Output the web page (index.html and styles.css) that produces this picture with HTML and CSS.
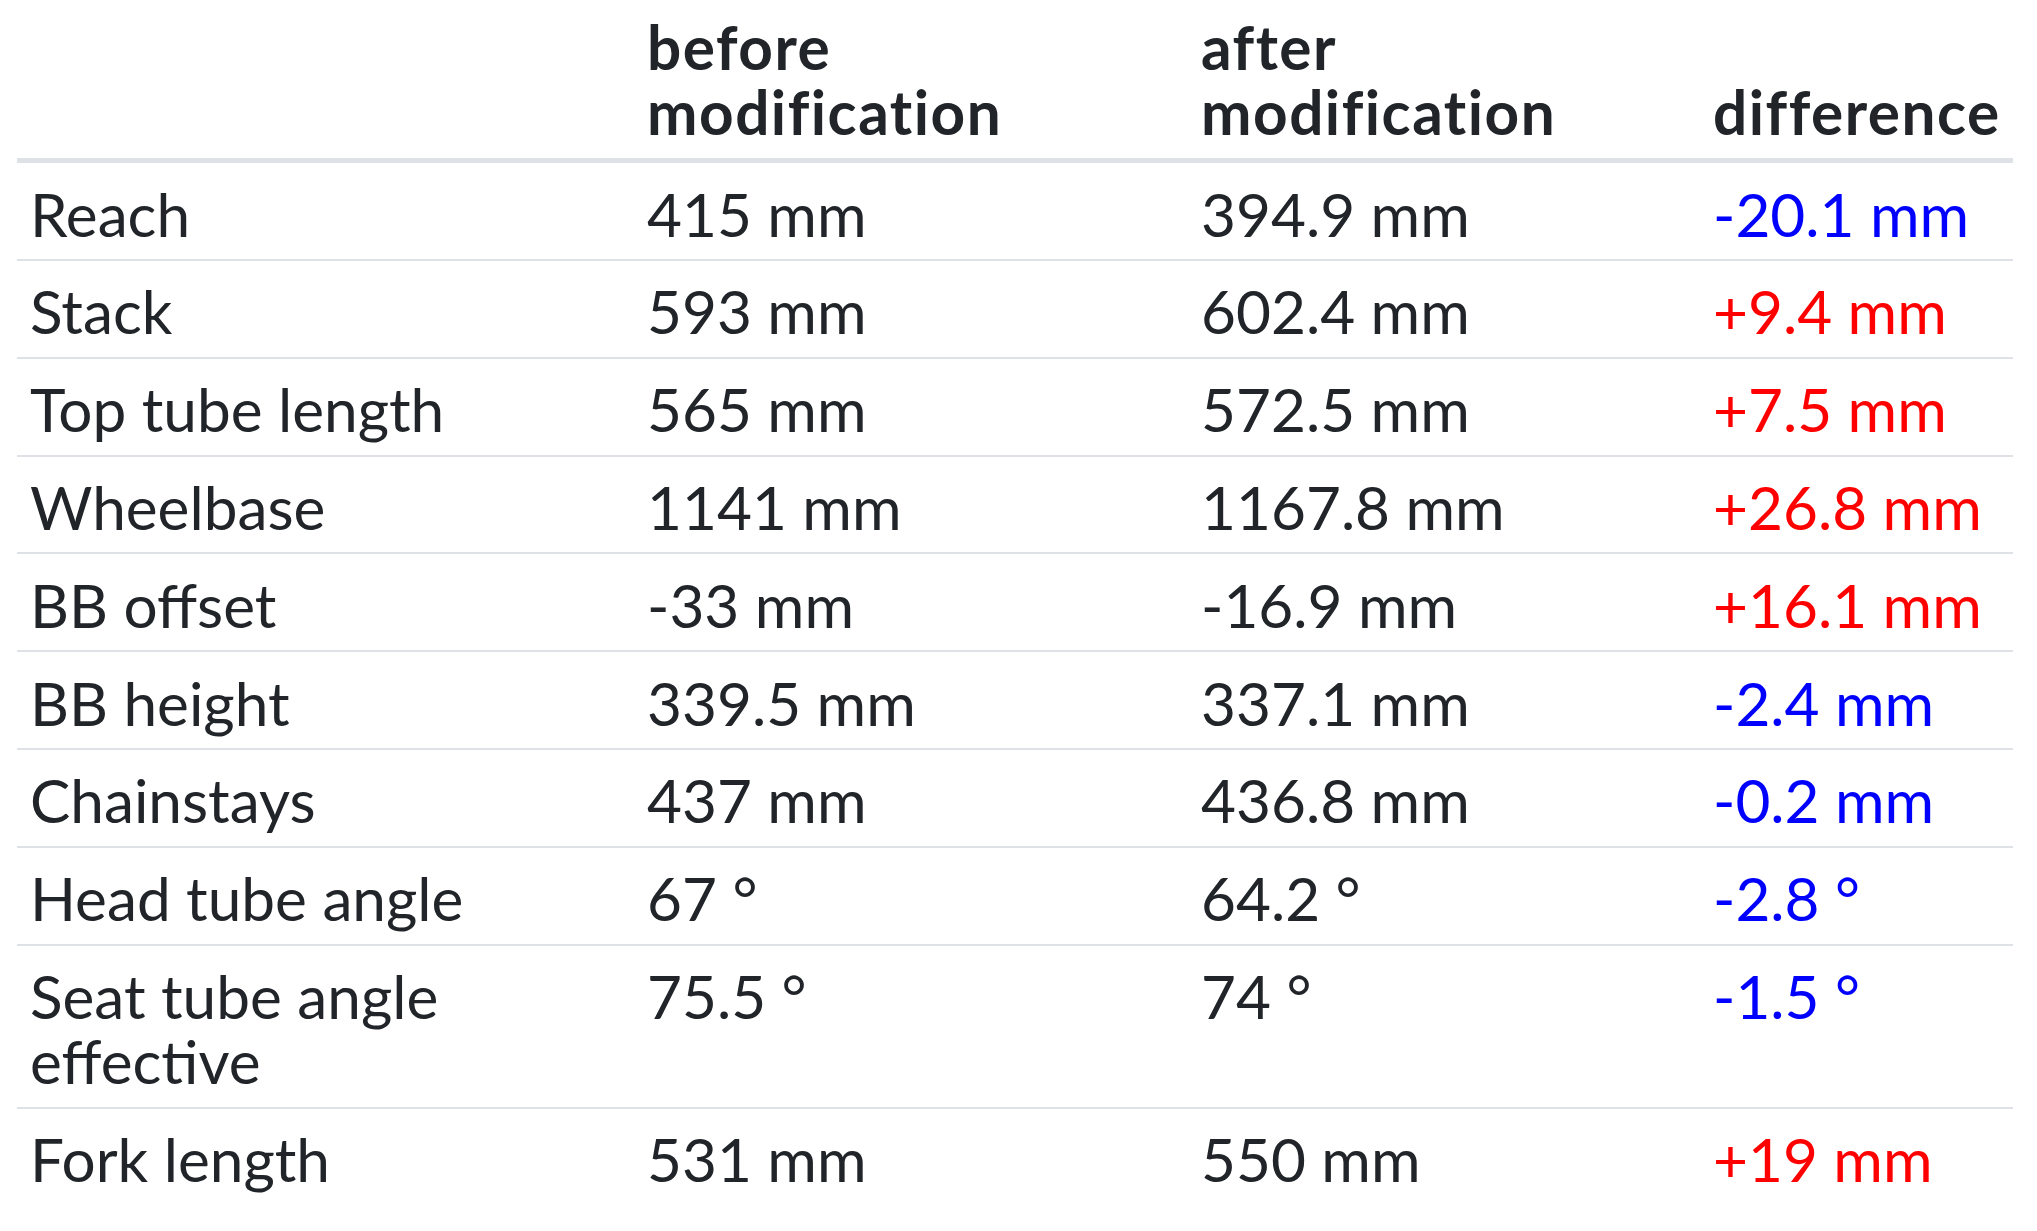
FILE: index.html
```html
<!DOCTYPE html>
<html>
<head>
<meta charset="utf-8">
<title>Geometry comparison</title>
<link rel="stylesheet" href="styles.css">
</head>
<body>
<div class="page">
<table class="geo">
  <colgroup>
    <col class="c-name">
    <col class="c-before">
    <col class="c-after">
    <col class="c-diff">
  </colgroup>
  <thead>
    <tr>
      <th></th>
      <th>before<br>modification</th>
      <th>after<br>modification</th>
      <th>difference</th>
    </tr>
  </thead>
  <tbody>
    <tr><td>Reach</td><td>415 mm</td><td>394.9 mm</td><td class="neg">-20.1 mm</td></tr>
    <tr><td>Stack</td><td>593 mm</td><td>602.4 mm</td><td class="pos">+9.4 mm</td></tr>
    <tr><td>Top tube length</td><td>565 mm</td><td>572.5 mm</td><td class="pos">+7.5 mm</td></tr>
    <tr><td>Wheelbase</td><td>1141 mm</td><td>1167.8 mm</td><td class="pos">+26.8 mm</td></tr>
    <tr><td>BB offset</td><td>-33 mm</td><td>-16.9 mm</td><td class="pos">+16.1 mm</td></tr>
    <tr><td>BB height</td><td>339.5 mm</td><td>337.1 mm</td><td class="neg">-2.4 mm</td></tr>
    <tr><td>Chainstays</td><td>437 mm</td><td>436.8 mm</td><td class="neg">-0.2 mm</td></tr>
    <tr><td>Head tube angle</td><td>67 °</td><td>64.2 °</td><td class="neg">-2.8 °</td></tr>
    <tr><td>Seat tube angle<br>effective</td><td>75.5 °</td><td>74 °</td><td class="neg">-1.5 °</td></tr>
    <tr><td>Fork length</td><td>531 mm</td><td>550 mm</td><td class="pos">+19 mm</td></tr>
  </tbody>
</table>
</div>
</body>
</html>
```

FILE: styles.css
```css
html, body {
  margin: 0;
  padding: 0;
  background: #ffffff;
}

.page {
  padding: 0 24px 0 17px;
}

.geo {
  width: 1996px;
  table-layout: fixed;
  border-collapse: collapse;
  font-family: "Lato", "Open Sans", sans-serif;
  font-size: 60.3px;
  line-height: 65.5px;
  color: #212529;
}

.c-name { width: 614px; }
.c-before { width: 554px; }
.c-after { width: 512px; }
.c-diff { width: 316px; }

.geo th,
.geo td {
  text-align: left;
  vertical-align: top;
  padding: 17.25px 16px 13.05px 16px;
}

.geo th:first-child,
.geo td:first-child {
  padding-left: 13px;
}

.geo th {
  font-weight: 700;
  letter-spacing: 1.5px;
  vertical-align: bottom;
  padding-top: 13.75px;
  padding-bottom: 13.55px;
  border-bottom: 5px solid #dee2e6;
}

.geo td {
  font-weight: 400;
  border-bottom: 2.4px solid #dee2e6;
}

.geo tbody tr:last-child td {
  border-bottom: 0;
}

.geo .neg { color: #0000ff; }
.geo .pos { color: #ff0000; }
```
